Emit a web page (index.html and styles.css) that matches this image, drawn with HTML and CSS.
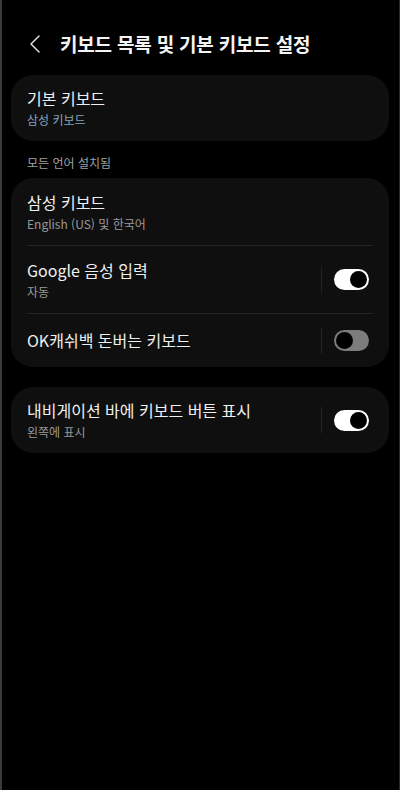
FILE: index.html
```html
<!DOCTYPE html>
<html lang="ko">
<head>
<meta charset="utf-8">
<link rel="stylesheet" href="styles.css">
</head>
<body>
<div class="screen">
  <header class="header">
    <svg class="back" width="14" height="20" viewBox="0 0 14 20"><path d="M11 2 L3 10 L11 18" fill="none" stroke="#e0e0e0" stroke-width="1.5" stroke-linecap="round" stroke-linejoin="round"/></svg>
    <h1 class="title">키보드 목록 및 기본 키보드 설정</h1>
  </header>

  <section class="card card-first">
    <div class="row row-two">
      <div class="texts">
        <div class="row-title">기본 키보드</div>
        <div class="row-sub accent">삼성 키보드</div>
      </div>
    </div>
  </section>

  <div class="section-label">모든 언어 설치됨</div>

  <section class="card">
    <div class="row row-two">
      <div class="texts">
        <div class="row-title">삼성 키보드</div>
        <div class="row-sub">English (US) 및 한국어</div>
      </div>
    </div>
    <div class="divider"></div>
    <div class="row row-two">
      <div class="texts">
        <div class="row-title">Google 음성 입력</div>
        <div class="row-sub">자동</div>
      </div>
      <div class="sep"></div>
      <div class="toggle on"><span class="knob"></span></div>
    </div>
    <div class="divider"></div>
    <div class="row row-one">
      <div class="texts">
        <div class="row-title">OK캐쉬백 돈버는 키보드</div>
      </div>
      <div class="sep"></div>
      <div class="toggle off"><span class="knob"></span></div>
    </div>
  </section>

  <section class="card card-last">
    <div class="row row-two">
      <div class="texts">
        <div class="row-title">내비게이션 바에 키보드 버튼 표시</div>
        <div class="row-sub">왼쪽에 표시</div>
      </div>
      <div class="sep"></div>
      <div class="toggle on"><span class="knob"></span></div>
    </div>
  </section>
</div>
</body>
</html>
```

FILE: styles.css
```css
* { box-sizing: border-box; }
html, body {
  margin: 0;
  padding: 0;
  background: #000;
}
body {
  font-family: "Noto Sans CJK KR", "Noto Sans", sans-serif;
  color: #f2f2f2;
}
.screen {
  width: 400px;
  height: 790px;
  border-left: 2px solid #3a3a3a;
  border-right: 1px solid #2a2a2a;
  padding: 0 10px 0 9px;
  overflow: hidden;
}
.header {
  display: flex;
  align-items: center;
  height: 75px;
  padding-left: 17px;
  padding-top: 12px;
}
.back {
  display: block;
  margin-right: 18px;
}
.title {
  margin: 0;
  font-size: 19px;
  font-weight: 700;
  line-height: 28px;
  color: #f4f4f4;
  letter-spacing: -0.2px;
}
.card {
  background: #0f0f0f;
  border-radius: 22px;
}
.row {
  display: flex;
  align-items: center;
  padding: 0 20px 0 16px;
}
.row-two { height: 67px; }
.row-one { height: 53px; }
.card-first .row-two, .card-last .row-two { height: 66px; }
.texts {
  flex: 1;
  display: flex;
  flex-direction: column;
  gap: 3px;
}
.row-title {
  font-size: 16px;
  line-height: 21px;
  color: #f0f0f0;
}
.row-sub {
  font-size: 12px;
  line-height: 16px;
  color: #9a9a9a;
}
.row-sub.accent { color: #86a3bd; }
.section-label {
  font-size: 12px;
  line-height: 16px;
  color: #a0a0a0;
  padding: 14px 0 7px 16px;
}
.divider {
  height: 1px;
  background: #242424;
  margin: 0 16px;
}
.sep {
  width: 1px;
  height: 26px;
  background: #242424;
  margin-right: 12px;
}
.toggle {
  width: 35px;
  height: 21px;
  border-radius: 11px;
  position: relative;
}
.toggle.on { background: #ffffff; }
.toggle.off { background: #7c7c7c; }
.knob {
  position: absolute;
  top: 2px;
  width: 17px;
  height: 17px;
  border-radius: 50%;
  background: #000;
}
.toggle.on .knob { right: 2px; }
.toggle.off .knob {
  left: 2px;
  background: #000;
}
.card-last { margin-top: 20px; }
```
